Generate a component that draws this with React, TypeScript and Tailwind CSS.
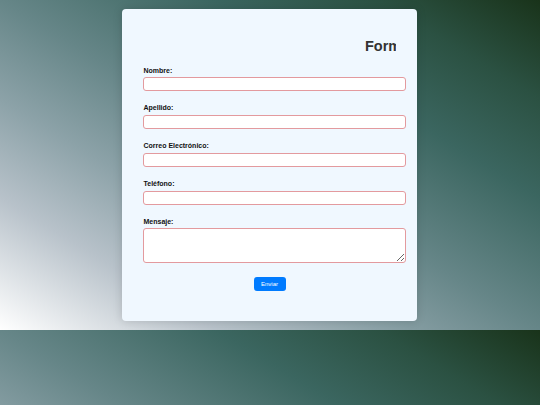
import React from "react";

const fields = [
  { label: "Nombre:", type: "text" },
  { label: "Apellido:", type: "text" },
  { label: "Correo Electrónico:", type: "email" },
  { label: "Teléfono:", type: "tel" },
];

export default function App() {
  return (
    <div
      className="h-[405px] w-full bg-[linear-gradient(to_top_right,#ffffff_0%,#b8c2ca_20%,#8ca2a8_35%,#668688_50%,#3b6660_70%,#2b5142_85%,#19331a_100%)] bg-[length:100%_330px] bg-repeat"
      style={{ fontFamily: '"Liberation Sans", Arial, sans-serif' }}
    >
      <div className="flex justify-center pt-[9px] pr-[1px]">
        <form
          className="w-[295px] h-[312px] rounded-[4px] bg-[#f0f8ff] px-[21px] pt-[27.5px] shadow-[0_0_10px_rgba(0,0,0,0.15)]"
          onSubmit={(e) => e.preventDefault()}
        >
          <div className="flex justify-end">
            <h2 className="w-[31px] overflow-hidden whitespace-nowrap text-[14.5px] leading-[18px] font-bold text-[#333333]">
              Formulario
            </h2>
          </div>
          <div className="mt-[12px] flex flex-col">
            {fields.map((f) => (
              <div key={f.label} className="mb-[13px] flex flex-col">
                <label className="text-[7px] leading-[8px] font-bold text-[#111111] mb-[2.4px] pl-[0.5px]">
                  {f.label}
                </label>
                <input
                  type={f.type}
                  required
                  className="w-[263px] h-[14.5px] rounded-[3px] border border-[#e39a9e] bg-white outline-none"
                />
              </div>
            ))}
            <div className="flex flex-col">
              <label className="text-[7px] leading-[8px] font-bold text-[#111111] mb-[2.4px] pl-[0.5px]">
                Mensaje:
              </label>
              <textarea
                required
                className="w-[263px] h-[34.5px] rounded-[3px] border border-[#e39a9e] bg-white outline-none"
              />
            </div>
          </div>
          <div className="mt-[14px] flex justify-center">
            <button
              type="submit"
              className="w-[32px] h-[14.5px] rounded-[3px] bg-[#007bff] text-[6px] leading-[14px] text-white"
            >
              Enviar
            </button>
          </div>
        </form>
      </div>
    </div>
  );
}
